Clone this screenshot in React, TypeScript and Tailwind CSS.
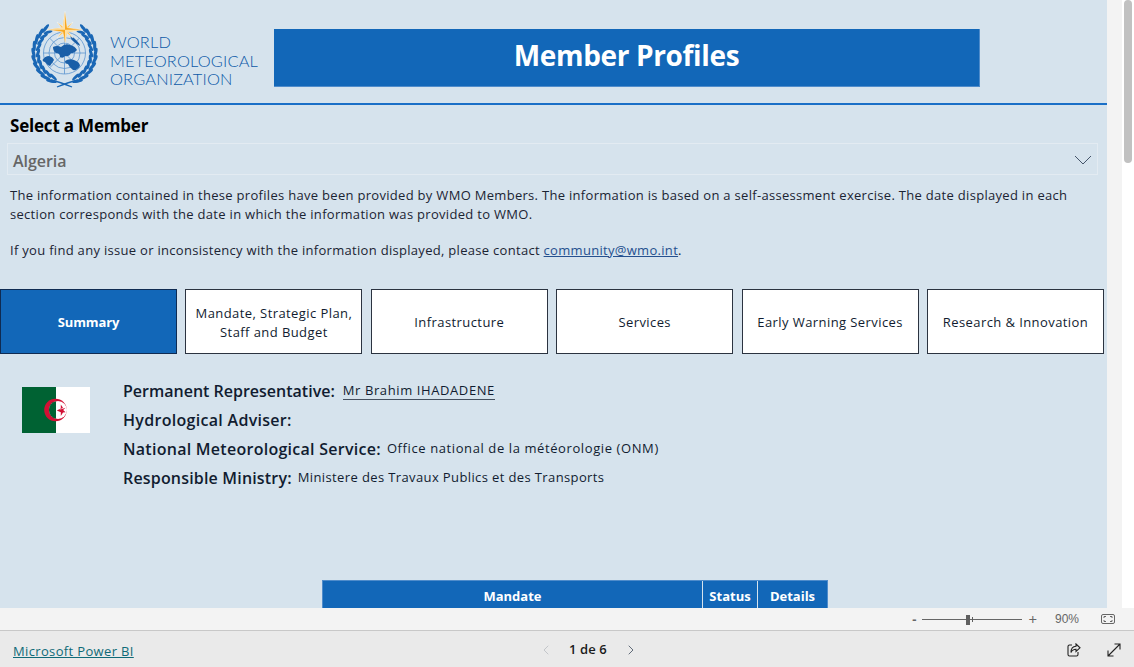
import { ChevronLeft, ChevronRight } from "lucide-react";

const TABS = [
  "Summary",
  "Mandate, Strategic Plan, Staff and Budget",
  "Infrastructure",
  "Services",
  "Early Warning Services",
  "Research & Innovation",
];

const LEAF_ANGLES = [-52, -39, -26, -13, 0, 13, 26, 39, 52, 65];

function WmoLogo() {
  const cx = 37.5;
  const cy = 43;
  return (
    <svg width="76" height="80" viewBox="0 0 76 80" className="shrink-0">
      {/* wreath, two rows of leaves on each side */}
      {LEAF_ANGLES.map((deg) => {
        const a = (deg * Math.PI) / 180;
        const outerX = 31 * Math.cos(a);
        const innerX = 26.5 * Math.cos(a);
        const outerY = cy + 31 * Math.sin(a);
        const innerY = cy + 26.5 * Math.sin(a);
        return (
          <g key={deg} fill="#1a67b5">
            <ellipse cx={cx - outerX} cy={outerY} rx="1.6" ry="5.4" transform={`rotate(${-deg - 14} ${cx - outerX} ${outerY})`} />
            <ellipse cx={cx - innerX} cy={innerY} rx="1.5" ry="4.6" transform={`rotate(${-deg + 18} ${cx - innerX} ${innerY})`} />
            <ellipse cx={cx + outerX} cy={outerY} rx="1.6" ry="5.4" transform={`rotate(${deg + 14} ${cx + outerX} ${outerY})`} />
            <ellipse cx={cx + innerX} cy={innerY} rx="1.5" ry="4.6" transform={`rotate(${deg - 18} ${cx + innerX} ${innerY})`} />
          </g>
        );
      })}
      <path d="M24 70 Q33 72 45 77 M51 70 Q42 72 30 77" stroke="#1a67b5" strokeWidth="1.3" fill="none" />
      {/* globe */}
      <g fill="none" stroke="#5a94cf" strokeWidth="0.8">
        <circle cx={cx} cy={cy} r="21" />
        <circle cx={cx} cy={cy} r="15.5" />
        <circle cx={cx} cy={cy} r="10" />
        <path d="M37.5 22V64M16.5 43H58.5M22.6 28.1L52.4 57.9M52.4 28.1L22.6 57.9" />
      </g>
      {/* continents */}
      <g fill="#1a5fa8">
        <path d="M26 37 Q30 35 34 37 Q38 33 43 35 Q48 36 50 40 Q47 44 44 43 Q42 47 38 46 Q36 49 33 47 Q33 43 29 43 Q26 41 26 37Z" />
        <path d="M38 51 Q42 48 47 50 Q53 52 53 56 Q50 61 46 60 Q42 57 41 54 Q38 54 38 51Z" />
        <path d="M15.5 50 Q18 46 22 46 Q26 47 27 50 Q25 53 23 56 Q20 55 18 52 Q16 52 15.5 50Z" />
        <path d="M43 26 Q47 27 50 31 Q53 34 53 36 Q49 34 46 31 Q44 29 43 26Z" />
      </g>
      {/* compass star */}
      <path d="M30 12 L38 18 L46 12 L40 20 L46 28 L38 22 L30 28 L36 20Z" fill="#fbc564" stroke="#ffffff" strokeWidth="0.4" />
      <path d="M38 1.5 L40.2 17.6 L55.5 19.8 L40.2 22 L38 33 L35.8 22 L20.5 19.8 L35.8 17.6Z" fill="#f7a823" stroke="#ffffff" strokeWidth="0.4" />
      <path d="M38 1.5 L38 19.8 L20.5 19.8 L35.8 17.6Z M38 19.8 L55.5 19.8 L40.2 22 L38 33Z" fill="#fde0a8" />
    </svg>
  );
}

function AlgeriaFlag() {
  return (
    <svg width="68" height="46" viewBox="0 0 68 46" className="shrink-0">
      <rect width="68" height="46" fill="#ffffff" />
      <rect width="34" height="46" fill="#006233" />
      <circle cx="33.5" cy="23" r="11.3" fill="#d21034" />
      <circle cx="36" cy="23" r="9" fill="#ffffff" />
      <path d="M34 14.2 A9 9 0 0 0 34 31.8Z" fill="#006233" />
      <polygon
        points="37,23 43.5,20.8 41.2,23 43.5,25.2 41,25.5 38.8,29 38.8,25.2 34.8,23.5 38.8,21.6 38.8,17.5 41,20.8"
        fill="#d21034"
      />
    </svg>
  );
}

export default function App() {
  return (
    <div className="flex h-[667px] w-[1134px] flex-col overflow-hidden bg-white font-['Open_Sans','Noto_Sans',sans-serif] text-[#111c30]">
      <div className="flex h-[608px] shrink-0">
        <main className="h-full w-[1107px] shrink-0 overflow-hidden bg-[#d6e3ed]">
          <header className="flex h-[105px] items-start border-b-2 border-[#1a6fc7] pl-[27px] pt-[10px]">
            <WmoLogo />
            <div className="ml-[7px] mt-[23px] w-[149px] font-['Lato',sans-serif] text-[16.4px] leading-[18.5px] font-light tracking-[0.15px] whitespace-nowrap text-[#0d5aa8]">
              WORLD
              <br />
              METEOROLOGICAL
              <br />
              ORGANIZATION
            </div>
            <div className="ml-[15px] mt-[19px] flex h-[58px] w-[706px] items-center justify-center border-r border-b border-[#4f8ccb] bg-[#1267b8] pb-[6px] text-[28px] font-bold tracking-[-0.35px] text-white">
              Member Profiles
            </div>
          </header>

          <h2 className="ml-[10px] mt-[9px] text-[17px] leading-[24px] font-bold tracking-[-0.2px] text-black">
            Select a Member
          </h2>
          <div className="ml-[7px] mt-[5px] flex h-[32px] w-[1091px] items-center justify-between border border-[#e3ebf2] pl-[5px] pr-[5px]">
            <span className="pt-[3px] text-[16px] font-semibold tracking-[-0.05px] text-[#666666]">Algeria</span>
            <svg width="18" height="10" viewBox="0 0 18 10" fill="none" stroke="#44546a" strokeWidth="1" className="mt-[1px]">
              <path d="M1 1L9 9L17 1" />
            </svg>
          </div>

          <div className="ml-[10px] mt-[11px] w-[1075px] text-[13px] leading-[18.5px] tracking-[0.3px] text-[#1b2433]">
            <p>
              The information contained in these profiles have been provided by WMO Members. The information is based on a self-assessment exercise. The date displayed in each section corresponds with the date in which the information was provided to WMO.
            </p>
            <p className="mt-[18px]">
              If you find any issue or inconsistency with the information displayed, please contact{" "}
              <span className="text-[#25508f] underline">community@wmo.int</span>.
            </p>
          </div>

          <nav className="mt-[29px] grid w-[1104px] grid-cols-6 gap-[8.4px]">
            {TABS.map((tab, i) => (
              <div
                key={tab}
                className={
                  i === 0
                    ? "flex h-[65px] items-center justify-center border border-[#0f2b52] bg-[#1267b8] pt-[4px] text-center text-[13px] font-bold tracking-[-0.15px] text-white"
                    : "flex h-[65px] items-center justify-center border border-[#2b3340] bg-white px-2 pt-[3px] text-center text-[13px] leading-[19px] font-medium tracking-[0.42px] text-[#111c30]"
                }
              >
                {tab}
              </div>
            ))}
          </nav>

          <section className="ml-[22px] mt-[33px] flex h-[193px] items-start">
            <AlgeriaFlag />
            <div className="ml-[33px] -mt-[10px] text-[16px] font-semibold">
              <div className="flex h-[29px] items-center gap-[8px]">
                <span>Permanent Representative:</span>
                <span className="border-b border-[#44505f] text-[13px] leading-[17px] font-medium tracking-[0.6px]">Mr Brahim IHADADENE</span>
              </div>
              <div className="flex h-[29px] items-center tracking-[0.3px]">Hydrological Adviser:</div>
              <div className="flex h-[29px] items-center gap-[6px]">
                <span className="tracking-[0.27px]">National Meteorological Service:</span>
                <span className="text-[13px] font-medium tracking-[0.6px]">Office national de la météorologie (ONM)</span>
              </div>
              <div className="flex h-[28px] items-center gap-[6px]">
                <span className="tracking-[0.18px]">Responsible Ministry:</span>
                <span className="text-[13px] font-medium tracking-[0.38px]">Ministere des Travaux Publics et des Transports</span>
              </div>
            </div>
          </section>

          <div className="ml-[322px] flex h-[40px] w-[506px] border border-[#4f8ccb] bg-[#1267b8] text-[13px] font-bold leading-[30px] text-white">
            <div className="w-[380px] border-r border-[#d6e3ed] text-center">Mandate</div>
            <div className="w-[55px] border-r border-[#d6e3ed] text-center">Status</div>
            <div className="flex-1 text-center">Details</div>
          </div>
        </main>

        <div className="h-full w-[15px] shrink-0 bg-[#f3f3f3]" />
        <div className="h-full flex-1 pl-[2px] pr-[2px]">
          <div className="h-[163px] w-[8px] rounded-[4px] bg-[#c1c1c1]" />
        </div>
      </div>

      <div className="flex h-[22px] shrink-0 items-center justify-end bg-[#f3f3f3] pr-[19px] text-[#666666]">
        <span className="text-[13px] font-bold leading-none">-</span>
        <div className="relative mx-[6px] h-px w-[100px] bg-[#666666]">
          <div className="absolute left-[44px] top-[-4px] h-[10px] w-[4px] bg-[#5f5f5f]" />
          <div className="absolute left-[50px] top-[-2px] h-[5px] w-px bg-[#5f5f5f]" />
        </div>
        <span className="text-[15px] leading-none">+</span>
        <span className="ml-[18px] w-[24px] font-['Liberation_Sans',sans-serif] text-[12px]">90%</span>
        <svg width="14" height="12" viewBox="0 0 14 12" className="ml-[22px]" fill="none" stroke="#666666">
          <rect x="0.5" y="1.5" width="13" height="9" rx="1.5" />
          <path d="M3 5V3.5H5M9 3.5H11V5M11 7V8.5H9M5 8.5H3V7" />
        </svg>
      </div>

      <footer className="relative flex h-[37px] shrink-0 items-center justify-between border-t border-[#c8c8c8] bg-[#eaeaea] pl-[13px] pr-[13px]">
        <span className="pt-[5px] text-[13px] font-medium tracking-[0.35px] text-[#0f6a78] underline">Microsoft Power BI</span>
        <div className="absolute left-[538px] top-0 flex h-full items-center text-[13px] font-semibold text-[#1b1b1b]">
          <ChevronLeft size={16} strokeWidth={1.2} className="mt-[2px] text-[#b9bdc2]" />
          <span className="ml-[15px] mr-[16px] pt-[2px] tracking-[0.1px]">1 de 6</span>
          <ChevronRight size={16} strokeWidth={1.2} className="mt-[2px] text-[#3d4b5c]" />
        </div>
        <div className="mt-[2px] flex items-center gap-[26px]">
          <svg width="14" height="14" viewBox="0 0 14 14" fill="none" stroke="#222222" strokeWidth="1.1">
            <path d="M5 2H2.5A1.5 1.5 0 0 0 1 3.5V11.5A1.5 1.5 0 0 0 2.5 13H9.5A1.5 1.5 0 0 0 11 11.5V9" />
            <path d="M9 1L13 4.8L9 8.5V6.3C6.5 6.3 5 7.3 4 9.5C4 6 6 3.5 9 3.3Z" />
          </svg>
          <svg width="14" height="14" viewBox="0 0 14 14" fill="none" stroke="#222222" strokeWidth="1.1">
            <path d="M1 13L13 1M7.5 1H13V6.5M1 7.5V13H6.5" />
          </svg>
        </div>
      </footer>
    </div>
  );
}
